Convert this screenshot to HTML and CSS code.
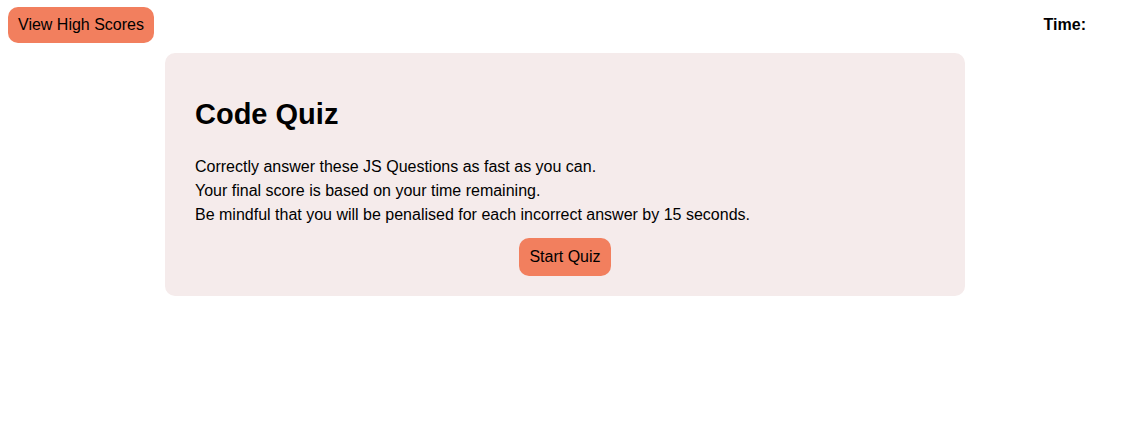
FILE: index.html
```html
<!DOCTYPE html>
<html>
<head>
<meta charset="utf-8">
<link rel="stylesheet" href="styles.css">
</head>
<body>
<header class="topbar">
  <button class="btn btn-scores">View High Scores</button>
  <div class="timer">Time: <span class="time-value"></span></div>
</header>
<main class="card">
  <h1 class="title">Code Quiz</h1>
  <p class="intro">Correctly answer these JS Questions as fast as you can.<br>Your final score is based on your time remaining.<br>Be mindful that you will be penalised for each incorrect answer by 15 seconds.</p>
  <div class="actions"><button class="btn btn-start">Start Quiz</button></div>
</main>
</body>
</html>
```
FILE: styles.css
```css
html, body { margin: 0; padding: 0; background: #fff; }
body {
  font-family: "Liberation Sans", Arial, sans-serif;
  font-size: 16px;
  color: #000;
  padding: 7px 8px;
}
.topbar {
  display: flex;
  justify-content: space-between;
  align-items: center;
  height: 36px;
}
.timer {
  font-weight: bold;
  font-size: 16px;
  margin-right: 32px;
}
.btn {
  font-family: "Liberation Sans", Arial, sans-serif;
  font-size: 16px;
  background: #f27f5e;
  color: #000;
  border: none;
  border-radius: 10px;
  padding: 9px 10px;
  line-height: 18px;
  cursor: pointer;
}
.card {
  width: 800px;
  box-sizing: border-box;
  margin: 10px 0 0 157px;
  background: #f5ebeb;
  border-radius: 10px;
  padding: 30px 30px 20px;
}
.title {
  font-size: 29px;
  font-weight: bold;
  margin: 15px 0 24px;
  line-height: 33px;
}
.intro {
  margin: 0;
  line-height: 24px;
}
.actions {
  display: flex;
  justify-content: center;
  margin-top: 11px;
}
.btn-start { padding: 10px 10px; }
```
